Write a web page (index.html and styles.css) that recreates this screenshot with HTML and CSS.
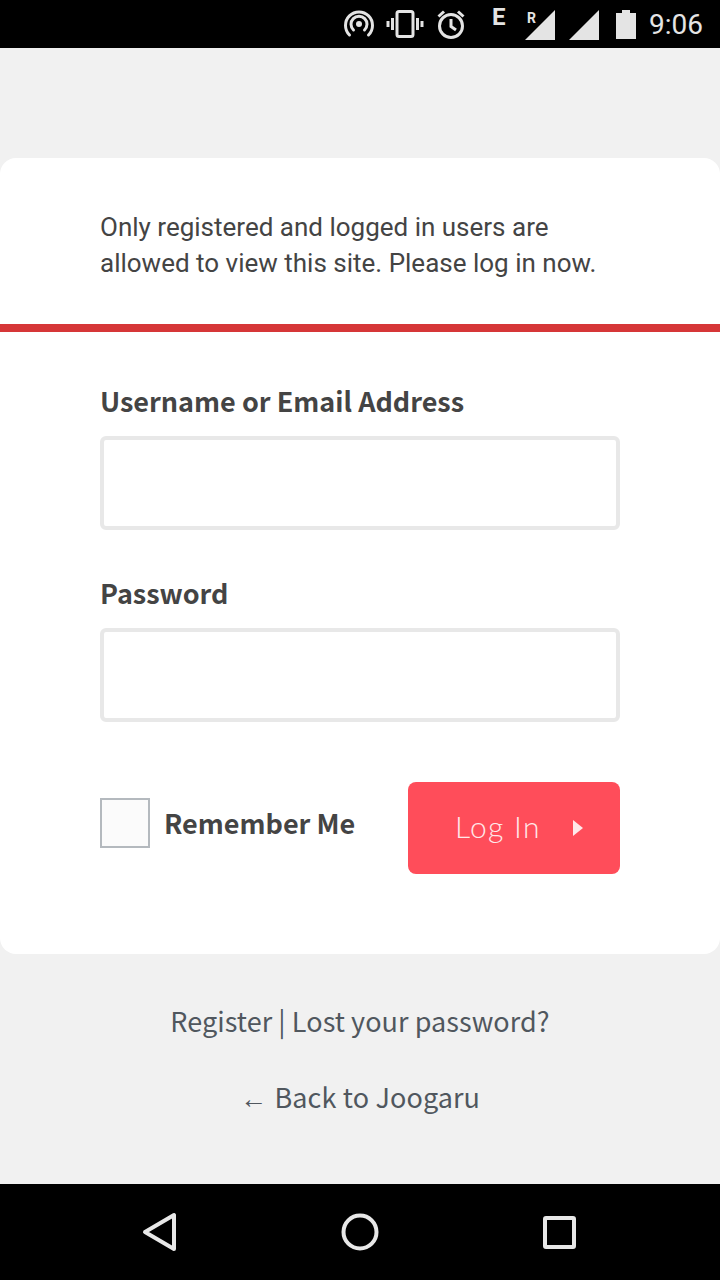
FILE: index.html
```html
<!DOCTYPE html>
<html lang="en">
<head>
<meta charset="utf-8">
<title>Log In</title>
<link rel="stylesheet" href="styles.css">
</head>
<body>
<div class="screen">
  <header class="status">
    <svg class="si si-cast" width="32" height="32" viewBox="0 0 32 32" fill="none" stroke="#e4e4e4" stroke-width="3" stroke-linecap="round">
      <circle cx="16" cy="15" r="3" fill="#e4e4e4" stroke="none"/>
      <path d="M10.5 21a8 8 0 1 1 11 0"/>
      <path d="M6.5 26a13.5 13.5 0 1 1 19 0"/>
    </svg>
    <svg class="si si-vib" width="38" height="32" viewBox="0 0 38 32" fill="none" stroke="#e4e4e4" stroke-width="3">
      <rect x="11" y="3.5" width="16" height="25" rx="2"/>
      <path d="M6.5 10v12M2 13v6M31.5 10v12M36 13v6"/>
    </svg>
    <svg class="si si-alarm" width="32" height="32" viewBox="0 0 32 32" fill="none" stroke="#e4e4e4" stroke-width="3">
      <circle cx="16" cy="18" r="11.5"/>
      <path d="M16 11v7.5l5 3.5M3.5 8.5 9 3.5M28.5 8.5 23 3.5"/>
    </svg>
    <span class="net">E</span>
    <span class="roam">
      <svg width="30" height="30" viewBox="0 0 30 30"><path d="M0 30 30 0v30z" fill="#e4e4e4"/></svg>
      <b class="roam-r">R</b>
    </span>
    <svg class="sig" width="30" height="30" viewBox="0 0 30 30"><path d="M0 30 30 0v30z" fill="#e4e4e4"/></svg>
    <svg class="bat" width="20" height="29" viewBox="0 0 20 29"><path d="M6 0h8v3h6v26H0V3h6z" fill="#e4e4e4"/></svg>
    <span class="clock">9:06</span>
  </header>

  <main class="page">
    <section class="card">
      <p class="message">Only registered and logged in users are<br>allowed to view this site. Please log in now.</p>
      <form class="form">
        <label class="label">Username or Email Address</label>
        <div class="input"></div>
        <label class="label label-next">Password</label>
        <div class="input"></div>
        <div class="actions">
          <div class="remember">
            <span class="check"></span>
            <span class="remember-text">Remember Me</span>
          </div>
          <div class="button">
            <span class="button-text">Log In</span>
            <svg width="10" height="16" viewBox="0 0 10 16"><path d="M0 0l10 8-10 8z" fill="#ffe9ea"/></svg>
          </div>
        </div>
      </form>
    </section>
    <p class="links">Register | Lost your password?</p>
    <p class="links back"><span class="arrow">←</span> Back to Joogaru</p>
  </main>

  <nav class="nav">
    <svg width="36" height="40" viewBox="0 0 36 40" fill="none" stroke="#e8e8e8" stroke-width="4" stroke-linejoin="round"><path d="M32 3v34L3 20z"/></svg>
    <svg width="38" height="38" viewBox="0 0 38 38" fill="none" stroke="#e8e8e8" stroke-width="4"><circle cx="19" cy="19" r="16.5"/></svg>
    <svg class="nav-recent" width="33" height="33" viewBox="0 0 33 33" fill="none" stroke="#e8e8e8" stroke-width="4" stroke-linejoin="round"><rect x="2" y="2" width="29" height="29" rx="1"/></svg>
  </nav>
</div>
</body>
</html>
```
FILE: styles.css
```css
* { box-sizing: border-box; }
html, body { margin: 0; padding: 0; }
body { width: 720px; height: 1280px; overflow: hidden; background: #f1f1f1; font-family: "Noto Sans CJK SC", "Open Sans", sans-serif; }
.screen { width: 720px; height: 1280px; display: flex; flex-direction: column; }

.status { height: 48px; background: #000; display: flex; align-items: center; justify-content: flex-end; padding-right: 17px; color: #e4e4e4; font-family: Roboto, sans-serif; flex: none; }
.si { display: block; }
.si-cast { margin-right: 11px; margin-top: 2px; }
.si-vib { margin-right: 11px; }
.si-alarm { margin-right: 25px; }
.net { font-size: 24px; font-weight: 700; line-height: 1; width: 16px; margin-right: 17px; margin-top: -15px; }
.roam { position: relative; display: block; width: 30px; height: 30px; margin-right: 14px; margin-top: 2px; }
.roam svg { display: block; }
.roam-r { position: absolute; left: 2px; top: 1px; font-size: 14px; line-height: 14px; font-weight: 700; }
.sig { display: block; margin-top: 2px; margin-right: 17px; }
.bat { display: block; margin-top: 0; margin-right: 13px; }
.clock { font-size: 28px; line-height: 48px; margin-top: 2px; }

.page { flex: 1; padding-top: 110px; display: flex; flex-direction: column; }
.card { background: #fff; border-radius: 16px; height: 796px; flex: none; }
.message { margin: 0; height: 174px; padding: 51px 100px 0; font-family: Roboto, sans-serif; font-size: 26px; line-height: 36px; color: #444; border-bottom: 8px solid #d63638; white-space: nowrap; }
.form { display: block; padding: 49px 100px 0; }
.label { display: block; font-size: 27px; line-height: 40px; font-weight: 700; color: #444; }
.label-next { margin-top: 43px; }
.input { height: 94px; margin-top: 15px; border: 4px solid #e8e8e8; border-radius: 6px; background: #fff; }
.actions { display: flex; justify-content: space-between; margin-top: 60px; }
.remember { display: flex; align-items: center; height: 50px; margin-top: 16px; }
.check { width: 50px; height: 50px; border: 2px solid #b4b9be; background: #fbfbfb; }
.remember-text { margin-left: 14px; font-size: 27px; font-weight: 700; color: #444; line-height: 48px; }
.button { width: 212px; height: 92px; background: #ff4d5a; border-radius: 8px; display: flex; align-items: center; padding-left: 47px; }
.button-text { font-family: Lato, sans-serif; font-weight: 300; font-size: 30px; letter-spacing: 1.3px; color: #ffe9ea; width: 118px; flex: none; margin-top: -4px; }

.links { margin: 0; text-align: center; font-size: 27px; line-height: 40px; color: #50575e; letter-spacing: 0.07px; }
.card + .links { margin-top: 47px; }
.back { margin-top: 36px; word-spacing: 0.3px; }
.arrow { font-family: "Liberation Sans", sans-serif; font-size: 27px; margin-right: 1px; }

.nav { height: 96px; background: #000; flex: none; display: flex; align-items: center; padding-left: 142px; gap: 163px; }
.nav-recent { margin-left: 1px; }
```
